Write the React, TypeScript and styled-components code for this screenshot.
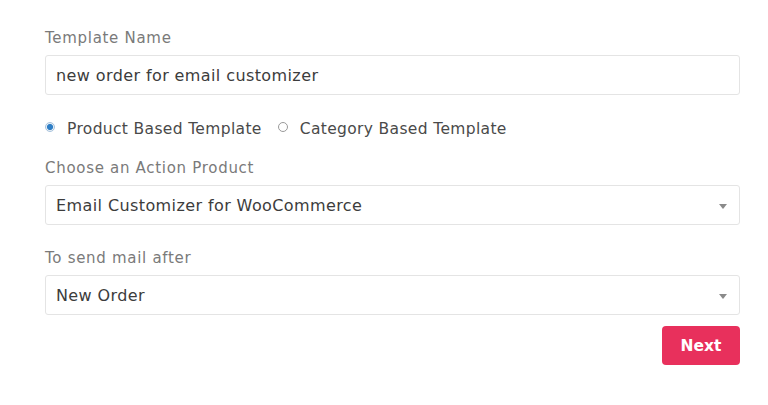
import React, { ReactElement, useState } from "react";
import styled, { createGlobalStyle } from "styled-components";

const GlobalStyle = createGlobalStyle`
    body {
        margin: 0;
        background: #ffffff;
        font-family: "DejaVu Sans", "Open Sans", sans-serif;
    }
`;

const Form = styled.form`
    display: flex;
    flex-direction: column;
    padding: 28px 28px 0 45px;
    width: 695px;
`;

const Label = styled.label`
    display: block;
    color: #7a7a7a;
    font-size: 15px;
    letter-spacing: 0.7px;
    line-height: 20px;
    margin-bottom: 7px;
`;

const Field = styled.div<{ $gap?: number }>`
    display: flex;
    flex-direction: column;
    margin-bottom: ${(p) => p.$gap ?? 0}px;
`;

const TextInput = styled.input`
    box-sizing: border-box;
    height: 40px;
    width: 100%;
    border: 1px solid #e4e4e4;
    border-radius: 3px;
    padding: 0 10px;
    font-family: inherit;
    font-size: 16px;
    letter-spacing: 0.4px;
    color: #3c3c3c;
    outline: none;
`;

const SelectBox = styled.div`
    position: relative;
    box-sizing: border-box;
    height: 40px;
    border: 1px solid #e4e4e4;
    border-radius: 3px;
    padding: 0 10px;
    display: flex;
    align-items: center;
    font-size: 16px;
    letter-spacing: 0.4px;
    color: #3c3c3c;
`;

const Caret = styled.span`
    position: absolute;
    right: 12px;
    top: 18px;
    width: 0;
    height: 0;
    border-left: 4px solid transparent;
    border-right: 4px solid transparent;
    border-top: 5px solid #8a8a8a;
`;

const RadioRow = styled.div`
    display: flex;
    align-items: center;
    gap: 16px;
    height: 30px;
    margin: 19px 0 14px;
`;

const RadioOption = styled.label`
    display: flex;
    align-items: flex-start;
    gap: 12px;
    color: #4a4a4a;
    font-size: 15.5px;
    letter-spacing: 0.35px;
    cursor: pointer;
`;

const RadioDot = styled.span<{ $checked: boolean }>`
    box-sizing: border-box;
    width: 10px;
    height: 10px;
    margin-top: 2px;
    border-radius: 50%;
    border: 1px solid ${(p) => (p.$checked ? "#a9c4dd" : "#9a9a9a")};
    background: ${(p) => (p.$checked ? "radial-gradient(circle, #2f7fc6 0 2.8px, #e7eef5 3.2px)" : "#fff")};
`;

const Actions = styled.div`
    display: flex;
    justify-content: flex-end;
    margin-top: 11px;
`;

const NextButton = styled.button`
    height: 39px;
    width: 78px;
    border: none;
    border-radius: 4px;
    background: #e8305c;
    color: #ffffff;
    font-family: inherit;
    font-size: 15.5px;
    font-weight: 600;
    cursor: pointer;
`;

export default function App(): ReactElement {
    const [name, setName] = useState("new order for email customizer");
    const [type, setType] = useState("product");

    return (
        <>
            <GlobalStyle />
            <Form onSubmit={(event) => event.preventDefault()}>
                <Field>
                    <Label htmlFor="template-name">Template Name</Label>
                    <TextInput id="template-name" value={name} onChange={(event) => setName(event.target.value)} />
                </Field>
                <RadioRow>
                    <RadioOption onClick={() => setType("product")}>
                        <RadioDot $checked={type === "product"} />
                        Product Based Template
                    </RadioOption>
                    <RadioOption onClick={() => setType("category")}>
                        <RadioDot $checked={type === "category"} />
                        Category Based Template
                    </RadioOption>
                </RadioRow>
                <Field $gap={23}>
                    <Label>Choose an Action Product</Label>
                    <SelectBox>
                        Email Customizer for WooCommerce
                        <Caret />
                    </SelectBox>
                </Field>
                <Field>
                    <Label>To send mail after</Label>
                    <SelectBox>
                        New Order
                        <Caret />
                    </SelectBox>
                </Field>
                <Actions>
                    <NextButton type="submit">Next</NextButton>
                </Actions>
            </Form>
        </>
    );
}
